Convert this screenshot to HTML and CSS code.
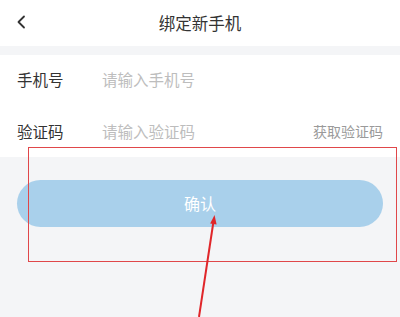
FILE: index.html
```html
<!DOCTYPE html>
<html lang="zh">
<head>
<meta charset="utf-8">
<title>绑定新手机</title>
<link rel="stylesheet" href="styles.css">
</head>
<body>
<div class="page">
  <header class="nav">
    <svg class="back" width="10" height="14" viewBox="0 0 10 14"><path d="M8 1.5 L2.5 7 L8 12.5" fill="none" stroke="#333" stroke-width="1.8" stroke-linecap="round" stroke-linejoin="round"/></svg>
    <h1 class="title">绑定新手机</h1>
  </header>
  <section class="form">
    <div class="row">
      <span class="label">手机号</span>
      <span class="placeholder">请输入手机号</span>
    </div>
    <div class="row">
      <span class="label">验证码</span>
      <span class="placeholder">请输入验证码</span>
      <span class="get-code">获取验证码</span>
    </div>
  </section>
  <div class="actions">
    <button class="confirm">确认</button>
  </div>
  <div class="highlight"></div>
  <svg class="arrow" width="400" height="317" viewBox="0 0 400 317"><line x1="199" y1="317" x2="213.4" y2="222" stroke="#e0262a" stroke-width="2"/><path d="M214.5 215 L210.2 223.5 L216.6 224.4 Z" fill="#e0262a"/></svg>
</div>
</body>
</html>
```
FILE: styles.css
```css
html, body {
  margin: 0;
  padding: 0;
}
body {
  background: #f4f5f7;
  font-family: "Noto Sans CJK SC", "Noto Sans", sans-serif;
}
.page {
  position: relative;
  width: 400px;
  height: 317px;
  overflow: hidden;
}
.nav {
  height: 46px;
  background: #fff;
  display: flex;
  align-items: center;
  justify-content: center;
  position: relative;
  margin-bottom: 9px;
}
.back {
  position: absolute;
  left: 16px;
  top: 15px;
}
.title {
  margin: 0;
  font-size: 16.5px;
  font-weight: 400;
  color: #333;
  line-height: 1;
}
.form {
  background: #fff;
}
.row {
  height: 51px;
  display: flex;
  align-items: center;
  padding: 0 17px 3px 17px;
  box-sizing: border-box;
}
.row + .row {
  padding-bottom: 1px;
}
.label {
  width: 85px;
  font-size: 15.5px;
  color: #333;
}
.placeholder {
  flex: 1;
  font-size: 15.5px;
  color: #bdbdbd;
}
.get-code {
  font-size: 14px;
  color: #9a9a9a;
}
.actions {
  padding: 23px 17px 0 17px;
}
.confirm {
  width: 100%;
  height: 47px;
  border: none;
  border-radius: 24px;
  background: #a9d0eb;
  color: #fff;
  font-family: inherit;
  font-size: 16px;
  padding: 0 0 2px 0;
}
.highlight {
  position: absolute;
  left: 28px;
  top: 147px;
  width: 369px;
  height: 115px;
  border: 1.5px solid #e0474a;
  box-sizing: border-box;
}
.arrow {
  position: absolute;
  left: 0;
  top: 0;
}
```
